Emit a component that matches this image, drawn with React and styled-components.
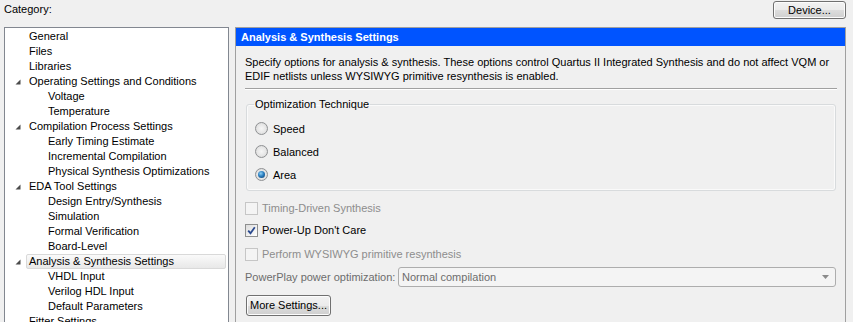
import React from 'react';
import styled, { createGlobalStyle } from 'styled-components';

const Global = createGlobalStyle`
  html, body { margin: 0; padding: 0; background: #f0f0f0; overflow: hidden; }
  body { font-family: "Liberation Sans", Arial, sans-serif; font-size: 11px; color: #000; }
  * { box-sizing: border-box; }
`;

const Page = styled.div`
  width: 853px;
  height: 322px;
  overflow: hidden;
  padding: 1px 7px 0 4px;
  display: flex;
  flex-direction: column;
`;

const TopBar = styled.div`
  display: flex;
  justify-content: space-between;
  align-items: flex-start;
  height: 26px;
  flex: none;
`;

const CategoryLabel = styled.span`
  line-height: 14px;
  margin-top: 1px;
`;

const WinButton = styled.button`
  font: inherit;
  color: #000;
  height: ${p => p.$h}px;
  width: ${p => p.$w}px;
  padding: 0;
  border: 1px solid #707070;
  border-radius: 3px;
  background: linear-gradient(#f2f2f2 0%, #ebebeb 50%, #dddddd 51%, #cfcfcf 100%);
  box-shadow: inset 0 0 0 1px #fcfcfc;
  line-height: 1;
  cursor: default;
`;

const Main = styled.div`
  display: flex;
  gap: 6px;
  flex: 1;
  min-height: 0;
`;

const Tree = styled.div`
  width: 225px;
  flex: none;
  height: 330px;
  background: #fff;
  border: 1px solid #828790;
  padding-top: 1px;
`;

const Row = styled.div`
  display: flex;
  align-items: center;
  height: 15px;
  padding-left: ${p => p.$level * 19}px;
`;

const Toggle = styled.span`
  width: 21px;
  flex: none;
  display: flex;
  align-items: center;
  padding-left: 10px;
`;

const ItemLabel = styled.span`
  flex: 1;
  margin-right: 2px;
  height: 15px;
  line-height: 13px;
  padding-left: 2px;
  border: 1px solid ${p => (p.$selected ? '#d9d9d9' : 'transparent')};
  border-radius: 2px;
  background: ${p => (p.$selected ? 'linear-gradient(#fafafa, #e8e8e8)' : 'transparent')};
  white-space: nowrap;
`;

const Panel = styled.div`
  flex: 1;
  border: 1px solid #a0a0a0;
  border-bottom: none;
  display: flex;
  flex-direction: column;
`;

const PanelHeader = styled.div`
  height: 18px;
  background: #0054ff;
  color: #fff;
  font-weight: bold;
  line-height: 18px;
  padding-left: 5px;
`;

const PanelBody = styled.div`
  padding: 9px 8px 0 9px;
  display: flex;
  flex-direction: column;
`;

const Description = styled.p`
  margin: 0;
  line-height: 14px;
`;

const Separator = styled.div`
  margin-top: 5px;
  height: 2px;
  border-top: 1px solid #a0a0a0;
  border-bottom: 1px solid #ffffff;
`;

const GroupBox = styled.fieldset`
  margin: 7px 1px 0 1px;
  padding: 6px 7px 4px 7px;
  border: 1px solid #d8dbdd;
  border-radius: 3px;
  box-shadow: inset 0 0 0 1px #fafafa;
  min-width: 0;
`;

const Legend = styled.legend`
  padding: 0 1px;
  line-height: 14px;
`;

const RadioRow = styled.div`
  display: flex;
  align-items: center;
  height: 23px;
  gap: 5px;
  padding-left: 1px;
`;

const RadioCircle = styled.span`
  width: 13px;
  height: 13px;
  border-radius: 50%;
  border: 1px solid #8f9193;
  background: radial-gradient(circle at 50% 50%, #f6f6f6 0%, #e6e6e6 55%, #cfcfcf 100%);
  display: flex;
  align-items: center;
  justify-content: center;
  flex: none;
  &::after {
    content: '';
    width: 7px;
    height: 7px;
    border-radius: 50%;
    background: radial-gradient(circle at 40% 35%, #8fd0f5 0%, #2b7fc0 45%, #0b3766 100%);
    display: ${p => (p.$checked ? 'block' : 'none')};
  }
`;

const CheckRow = styled.div`
  display: flex;
  align-items: center;
  height: 22px;
  gap: 4px;
  margin-top: ${p => p.$mt}px;
  color: ${p => (p.$disabled ? '#8d8d8d' : '#000')};
`;

const CheckBox = styled.span`
  width: 13px;
  height: 13px;
  flex: none;
  border: 1px solid ${p => (p.$disabled ? '#c6c6c6' : '#8e8f8f')};
  background: ${p => (p.$disabled ? '#f4f4f4' : 'linear-gradient(135deg, #dcdcdc, #ffffff)')};
  display: flex;
  align-items: center;
  justify-content: center;
`;

const ComboRow = styled.div`
  display: flex;
  align-items: center;
  height: 20px;
  margin-top: 2px;
`;

const ComboLabel = styled.span`
  width: 153px;
  flex: none;
  color: #6d6d6d;
  white-space: nowrap;
`;

const Combo = styled.div`
  flex: 1;
  height: 20px;
  margin-right: 1px;
  border: 1px solid #adadad;
  border-radius: 3px;
  background: #f4f4f4;
  color: #6d6d6d;
  display: flex;
  align-items: center;
  justify-content: space-between;
  padding: 0 6px 0 3px;
`;

const ButtonRow = styled.div`
  margin-top: 8px;
  padding-left: 1px;
`;

const treeItems = [
  { label: 'General', level: 0 },
  { label: 'Files', level: 0 },
  { label: 'Libraries', level: 0 },
  { label: 'Operating Settings and Conditions', level: 0, expanded: true },
  { label: 'Voltage', level: 1 },
  { label: 'Temperature', level: 1 },
  { label: 'Compilation Process Settings', level: 0, expanded: true },
  { label: 'Early Timing Estimate', level: 1 },
  { label: 'Incremental Compilation', level: 1 },
  { label: 'Physical Synthesis Optimizations', level: 1 },
  { label: 'EDA Tool Settings', level: 0, expanded: true },
  { label: 'Design Entry/Synthesis', level: 1 },
  { label: 'Simulation', level: 1 },
  { label: 'Formal Verification', level: 1 },
  { label: 'Board-Level', level: 1 },
  { label: 'Analysis & Synthesis Settings', level: 0, expanded: true, selected: true },
  { label: 'VHDL Input', level: 1 },
  { label: 'Verilog HDL Input', level: 1 },
  { label: 'Default Parameters', level: 1 },
  { label: 'Fitter Settings', level: 0 },
];

const ExpandedGlyph = () => (
  <svg width="6" height="6" viewBox="0 0 6 6">
    <polygon points="5.5,0.5 5.5,5.5 0.5,5.5" fill="#4b4b4b" />
  </svg>
);

const CheckMark = () => (
  <svg width="9" height="9" viewBox="0 0 9 9">
    <polyline points="1.2,4.6 3.5,7.2 7.8,1.2" fill="none" stroke="#2b4a8f" strokeWidth="1.8" />
  </svg>
);

export default function App() {
  return (
    <>
      <Global />
      <Page>
        <TopBar>
          <CategoryLabel>Category:</CategoryLabel>
          <WinButton $w={73} $h={18}>Device...</WinButton>
        </TopBar>
        <Main>
          <Tree>
            {treeItems.map(item => (
              <Row key={item.label} $level={item.level}>
                <Toggle>{item.expanded && <ExpandedGlyph />}</Toggle>
                <ItemLabel $selected={item.selected}>{item.label}</ItemLabel>
              </Row>
            ))}
          </Tree>
          <Panel>
            <PanelHeader>Analysis &amp; Synthesis Settings</PanelHeader>
            <PanelBody>
              <Description>
                Specify options for analysis &amp; synthesis. These options control Quartus II Integrated Synthesis and do not affect VQM or
                <br />
                EDIF netlists unless WYSIWYG primitive resynthesis is enabled.
              </Description>
              <Separator />
              <GroupBox>
                <Legend>Optimization Technique</Legend>
                <RadioRow><RadioCircle />Speed</RadioRow>
                <RadioRow><RadioCircle />Balanced</RadioRow>
                <RadioRow><RadioCircle $checked />Area</RadioRow>
              </GroupBox>
              <CheckRow $mt={6} $disabled>
                <CheckBox $disabled />Timing-Driven Synthesis
              </CheckRow>
              <CheckRow $mt={0}>
                <CheckBox><CheckMark /></CheckBox>Power-Up Don't Care
              </CheckRow>
              <CheckRow $mt={2} $disabled>
                <CheckBox $disabled />Perform WYSIWYG primitive resynthesis
              </CheckRow>
              <ComboRow>
                <ComboLabel>PowerPlay power optimization:</ComboLabel>
                <Combo>
                  <span>Normal compilation</span>
                  <svg width="7" height="4" viewBox="0 0 7 4">
                    <polygon points="0,0 7,0 3.5,4" fill="#8a8a8a" />
                  </svg>
                </Combo>
              </ComboRow>
              <ButtonRow>
                <WinButton $w={85} $h={21}>More Settings...</WinButton>
              </ButtonRow>
            </PanelBody>
          </Panel>
        </Main>
      </Page>
    </>
  );
}
